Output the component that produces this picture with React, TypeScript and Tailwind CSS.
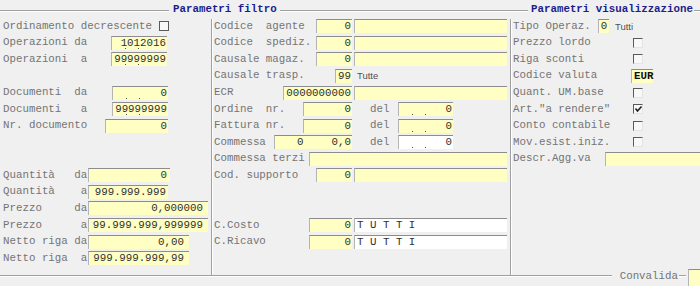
import React from "react";

type FProps = {
  w: string;
  children?: React.ReactNode;
  white?: boolean;
  dots?: boolean;
  cls?: string;
  j?: string;
};

function F({ w, children, white, dots, cls, j }: FProps) {
  return (
    <div
      className={`relative h-[14px] shrink-0 border-t border-l border-t-[#8c8c8c] border-l-[#b4b4b4] ${
        white ? "bg-white" : "bg-[#ffffc4]"
      } flex items-center ${j ?? "justify-end"} leading-[13px] text-[#303030] ${w} ${cls ?? "pr-px"}`}
    >
      {children}
      {dots && (
        <>
          <span className="absolute bottom-[1px] left-[13px] w-px h-px bg-[#505050]" />
          <span className="absolute bottom-[1px] left-[26px] w-px h-px bg-[#505050]" />
        </>
      )}
    </div>
  );
}

function CB({ checked, full }: { checked?: boolean; full?: boolean }) {
  return (
    <div
      className={`relative w-[10px] h-[10px] shrink-0 bg-[#f8f8f8] ${
        full
          ? "border border-[#5a5a5a]"
          : "border-t border-l border-b border-r border-t-[#5a5a5a] border-l-[#5a5a5a] border-b-[#e4e4e4] border-r-[#e4e4e4]"
      }`}
    >
      {checked && (
        <svg className="absolute left-0 top-0" width="9" height="9" viewBox="0 0 9 9">
          <path d="M1.5 3.5 L3.5 6 L7.5 1.5" stroke="#202020" strokeWidth="1.6" fill="none" />
        </svg>
      )}
    </div>
  );
}

function Row({ children }: { children?: React.ReactNode }) {
  return <div className="flex items-center h-[16.57px]">{children}</div>;
}

function Line({ cls }: { cls: string }) {
  return <div className={`h-[2px] border-t border-t-[#a0a0a0] border-b border-b-white ${cls}`} />;
}

const lb = "whitespace-pre shrink-0 leading-[13px]";

export default function App() {
  return (
    <div className="w-[700px] h-[286px] overflow-hidden bg-[#f0f0f0] font-['Liberation_Mono',monospace] text-[10.8px] text-[#747474] flex flex-col">
      {/* header */}
      <div className="h-[18px] flex items-start shrink-0">
        <Line cls="w-[169px] mt-[10px] shrink-0" />
        <div className="ml-[4px] mt-[3px] font-bold text-[#1c1c8c] whitespace-pre leading-[13px]">
          Parametri filtro
        </div>
        <Line cls="flex-1 mt-[10px] ml-[3px]" />
        <div className="ml-[3px] mt-[3px] font-bold text-[#1c1c8c] whitespace-pre leading-[13px] shrink-0">
          Parametri visualizzazione
        </div>
        <Line cls="w-[6px] mt-[10px] ml-[1px] shrink-0" />
      </div>

      {/* main */}
      <div className="h-[258px] flex shrink-0">
        {/* left column */}
        <div className="w-[211px] shrink-0 flex flex-col pl-[3px]">
          <Row>
            <span className={`${lb} w-[156px]`}>Ordinamento decrescente</span>
            <CB full />
          </Row>
          <Row>
            <span className={`${lb} w-[108px]`}>Operazioni da</span>
            <F w="w-[56px]" dots>1012016</F>
          </Row>
          <Row>
            <span className={`${lb} w-[108px]`}>Operazioni  a</span>
            <F w="w-[56px]" dots>99999999</F>
          </Row>
          <Row />
          <Row>
            <span className={`${lb} w-[109px]`}>Documenti  da</span>
            <F w="w-[56px]" dots>0</F>
          </Row>
          <Row>
            <span className={`${lb} w-[109px]`}>Documenti   a</span>
            <F w="w-[56px]" dots>99999999</F>
          </Row>
          <Row>
            <span className={`${lb} w-[102px]`}>Nr. documento</span>
            <F w="w-[63px]">0</F>
          </Row>
          <Row />
          <Row />
          <Row>
            <span className={`${lb} w-[85px]`}>Quantità   da</span>
            <F w="w-[82px]" cls="pr-[3px]">0</F>
          </Row>
          <Row>
            <span className={`${lb} w-[85px]`}>Quantità    a</span>
            <F w="w-[80px]" cls="pr-[2px]">999.999.999</F>
          </Row>
          <Row>
            <span className={`${lb} w-[85px]`}>Prezzo     da</span>
            <F w="w-[120px]" cls="pr-[5px]">0,000000</F>
          </Row>
          <Row>
            <span className={`${lb} w-[85px]`}>Prezzo      a</span>
            <F w="w-[120px]" cls="pr-[5px]">99.999.999,999999</F>
          </Row>
          <Row>
            <span className={`${lb} w-[85px]`}>Netto riga da</span>
            <F w="w-[101px]" cls="pr-[5px]">0,00</F>
          </Row>
          <Row>
            <span className={`${lb} w-[85px]`}>Netto riga  a</span>
            <F w="w-[101px]" cls="pr-[5px]">999.999.999,99</F>
          </Row>
        </div>

        <div className="w-[2px] shrink-0 mt-px border-l border-l-[#a0a0a0] border-r border-r-white" />

        {/* middle column */}
        <div className="w-[297px] shrink-0 flex flex-col pl-px">
          <Row>
            <span className={`${lb} w-[102px]`}>Codice  agente</span>
            <F w="w-[36px]">0</F>
            <F w="w-[153px] ml-[2px]" />
          </Row>
          <Row>
            <span className={`${lb} w-[102px]`}>Codice  spediz.</span>
            <F w="w-[36px]">0</F>
            <F w="w-[153px] ml-[2px]" />
          </Row>
          <Row>
            <span className={`${lb} w-[102px]`}>Causale magaz.</span>
            <F w="w-[36px]">0</F>
            <F w="w-[153px] ml-[2px]" />
          </Row>
          <Row>
            <span className={`${lb} w-[121px]`}>Causale trasp.</span>
            <F w="w-[17px]">99</F>
            <span className="ml-[5px] font-['Liberation_Sans',Arial,sans-serif] text-[9.5px] text-[#505050] leading-[13px]">
              Tutte
            </span>
          </Row>
          <Row>
            <span className={`${lb} w-[69px]`}>ECR</span>
            <F w="w-[69px]">0000000000</F>
            <F w="w-[153px] ml-[2px]" />
          </Row>
          <Row>
            <span className={`${lb} w-[89px]`}>Ordine  nr.</span>
            <F w="w-[49px]">0</F>
            <span className={`${lb} ml-[18px] w-[28px]`}>del</span>
            <F w="w-[55px]" dots>0</F>
          </Row>
          <Row>
            <span className={`${lb} w-[89px]`}>Fattura nr.</span>
            <F w="w-[49px]">0</F>
            <span className={`${lb} ml-[18px] w-[28px]`}>del</span>
            <F w="w-[55px]" dots>0</F>
          </Row>
          <Row>
            <span className={`${lb} w-[60px]`}>Commessa</span>
            <F w="w-[78px]" j="justify-between" cls="pl-[22px] pr-px">
              <span>0</span>
              <span>0,0</span>
            </F>
            <span className={`${lb} ml-[18px] w-[28px]`}>del</span>
            <F w="w-[55px]" white dots>0</F>
          </Row>
          <Row>
            <span className={`${lb} w-[95px]`}>Commessa terzi</span>
            <F w="w-[198px]" />
          </Row>
          <Row>
            <span className={`${lb} w-[102px]`}>Cod. supporto</span>
            <F w="w-[36px]">0</F>
            <F w="w-[153px] ml-[2px]" />
          </Row>
          <Row />
          <Row />
          <Row>
            <span className={`${lb} w-[95px]`}>C.Costo</span>
            <F w="w-[43px]">0</F>
            <F w="w-[153px] ml-[2px]" white j="justify-start" cls="pl-[2px]">
              <span className="whitespace-pre text-[#303030]">T U T T I</span>
            </F>
          </Row>
          <Row>
            <span className={`${lb} w-[95px]`}>C.Ricavo</span>
            <F w="w-[43px]">0</F>
            <F w="w-[153px] ml-[2px]" white j="justify-start" cls="pl-[2px]">
              <span className="whitespace-pre text-[#303030]">T U T T I</span>
            </F>
          </Row>
        </div>

        <div className="w-[2px] shrink-0 mt-px border-l border-l-[#a0a0a0] border-r border-r-white" />

        {/* right column */}
        <div className="flex-1 flex flex-col pl-px min-w-0">
          <Row>
            <span className={`${lb} w-[85px]`}>Tipo Operaz.</span>
            <F w="w-[11px]" j="justify-center" cls="">0</F>
            <span className="ml-[6px] font-['Liberation_Sans',Arial,sans-serif] text-[9.5px] text-[#505050] leading-[13px]">
              Tutti
            </span>
          </Row>
          <Row>
            <span className={`${lb} w-[120px]`}>Prezzo lordo</span>
            <CB />
          </Row>
          <Row>
            <span className={`${lb} w-[120px]`}>Riga sconti</span>
            <CB />
          </Row>
          <Row>
            <span className={`${lb} w-[118px]`}>Codice valuta</span>
            <F w="w-[22px]" j="justify-start" cls="pl-[2px]">
              <span className="text-[#101010] font-bold">EUR</span>
            </F>
          </Row>
          <Row>
            <span className={`${lb} w-[120px]`}>Quant. UM.base</span>
            <CB />
          </Row>
          <Row>
            <span className={`${lb} w-[120px]`}>Art."a rendere"</span>
            <CB checked />
          </Row>
          <Row>
            <span className={`${lb} w-[120px]`}>Conto contabile</span>
            <CB />
          </Row>
          <Row>
            <span className={`${lb} w-[120px]`}>Mov.esist.iniz.</span>
            <CB />
          </Row>
          <Row>
            <span className={`${lb} w-[92px]`}>Descr.Agg.va</span>
            <F w="w-[100px]" />
          </Row>
        </div>
      </div>

      {/* footer */}
      <div className="-mt-[10px] h-[20px] flex items-center shrink-0">
        <Line cls="flex-1" />
        <span className={`${lb} ml-[8px]`}>Convalida</span>
        <Line cls="w-[7px] ml-[1px] shrink-0" />
        <div className="self-end ml-[2px] w-[12px] h-[17px] shrink-0 border-t border-l border-t-[#8c8c8c] border-l-[#b4b4b4] bg-[#ffffc4]" />
      </div>
    </div>
  );
}
